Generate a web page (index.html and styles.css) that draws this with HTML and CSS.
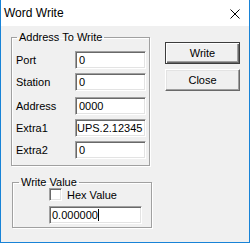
FILE: index.html
```html
<!DOCTYPE html>
<html lang="en">
<head>
    <meta charset="UTF-8">
    <title>Word Write</title>
    <link rel="stylesheet" href="styles.css">
</head>
<body>
    <div class="window">
        <div class="titlebar">
            <span class="title">Word Write</span>
            <svg class="close-icon" width="10" height="10" viewBox="0 0 10 10">
                <path d="M0.5 0.5L9.5 9.5M9.5 0.5L0.5 9.5" stroke="#000" stroke-width="1" fill="none"/>
            </svg>
        </div>

        <div class="client">
            <div class="groups">
                <fieldset class="group group-address">
                    <legend>Address To Write</legend>
                    <div class="field"><label>Port</label><div class="edit">0</div></div>
                    <div class="field"><label>Station</label><div class="edit">0</div></div>
                    <div class="field field-spaced"><label>Address</label><div class="edit">0000</div></div>
                    <div class="field"><label>Extra1</label><div class="edit edit-scrolled">UPS.2.12345</div></div>
                    <div class="field"><label>Extra2</label><div class="edit">0</div></div>
                </fieldset>

                <fieldset class="group group-value">
                    <legend>Write Value</legend>
                    <div class="value-box">
                        <div class="check-row">
                            <span class="checkbox"></span>
                            <span>Hex Value</span>
                        </div>
                        <div class="edit edit-value">0.000000<span class="caret"></span></div>
                    </div>
                </fieldset>
            </div>

            <div class="buttons">
                <button class="btn btn-default">Write</button>
                <button class="btn">Close</button>
            </div>
        </div>
    </div>
</body>
</html>
```

FILE: styles.css
```css
body {
    margin: 0;
    background: #fff;
    font-family: 'Liberation Sans', Arial, sans-serif;
    font-size: 11px;
    color: #000;
}

.window {
    width: 250px;
    height: 243px;
    box-sizing: border-box;
    border: 1px solid #1883d7;
    border-top: none;
    display: flex;
    flex-direction: column;
}

/* title bar */
.titlebar {
    height: 26px;
    flex: none;
    background: #fff;
    display: flex;
    align-items: center;
    justify-content: space-between;
    padding: 0 9px 0 3px;
}

.title {
    font-size: 12px;
}

.close-icon {
    margin-top: 1px;
}

/* dialog body */
.client {
    flex: 1;
    background: #f0f0f0;
    display: flex;
    align-items: flex-start;
}

.groups {
    margin-left: 10px;
    display: flex;
    flex-direction: column;
}

.group {
    margin: 0;
    min-inline-size: 0;
    box-sizing: border-box;
    border: 1px solid #a0a0a0;
    box-shadow: inset 1px 1px #fff, 1px 1px #fff;
}

.group legend {
    padding: 0 2px;
    line-height: 13px;
}

.group-address {
    margin-top: 5px;
    width: 139px;
    padding: 7px 3px 6px 4px;
}

.group-address legend {
    margin-left: 1px;
}

.group-value {
    margin: 10px 0 0 1px;
    width: 140px;
    padding: 0 4px 3px 4px;
}

.group-value legend {
    margin-left: 2px;
}

.field {
    display: flex;
    align-items: center;
    height: 18px;
    margin-top: 4px;
}

.field:first-of-type {
    margin-top: 0;
}

.field-spaced {
    margin-top: 6px;
}

.field label {
    width: 59px;
}

/* sunken edit box */
.edit {
    width: 71px;
    height: 18px;
    box-sizing: border-box;
    background: #fff;
    border: 1px solid;
    border-color: #a0a0a0 #fff #fff #a0a0a0;
    box-shadow: inset 1px 1px #696969, inset -1px -1px #e3e3e3;
    padding-left: 3px;
    line-height: 16px;
    white-space: nowrap;
    overflow: hidden;
}

.edit-scrolled {
    padding-left: 1px;
}

.value-box {
    margin-left: 32px;
}

.check-row {
    display: flex;
    align-items: center;
    gap: 5px;
    height: 13px;
    margin-top: -1px;
}

.checkbox {
    width: 13px;
    height: 13px;
    box-sizing: border-box;
    background: #fff;
    border: 1px solid;
    border-color: #a0a0a0 #fff #fff #a0a0a0;
    box-shadow: inset 1px 1px #696969, inset -1px -1px #e3e3e3;
}

.edit-value {
    width: 93px;
    margin-top: 5px;
    padding-left: 2px;
    display: flex;
    align-items: center;
}

.caret {
    display: inline-block;
    width: 0;
    height: 12px;
    border-left: 1px solid #000;
}

/* push buttons */
.buttons {
    margin: 16px 0 0 13px;
    display: flex;
    flex-direction: column;
    gap: 5px;
}

.btn {
    width: 75px;
    height: 22px;
    margin: 0;
    padding: 0;
    font-family: inherit;
    font-size: 11px;
    color: #000;
    background: #f0f0f0;
    border: 1px solid;
    border-color: #fff #696969 #696969 #fff;
    box-shadow: inset -1px -1px #a0a0a0, inset 1px 1px #e3e3e3;
}

.btn-default {
    border: 1px solid #3c3c3c;
    box-shadow: inset 1px 1px #fff, inset -1px -1px #696969, inset -2px -2px #a0a0a0;
}
```
